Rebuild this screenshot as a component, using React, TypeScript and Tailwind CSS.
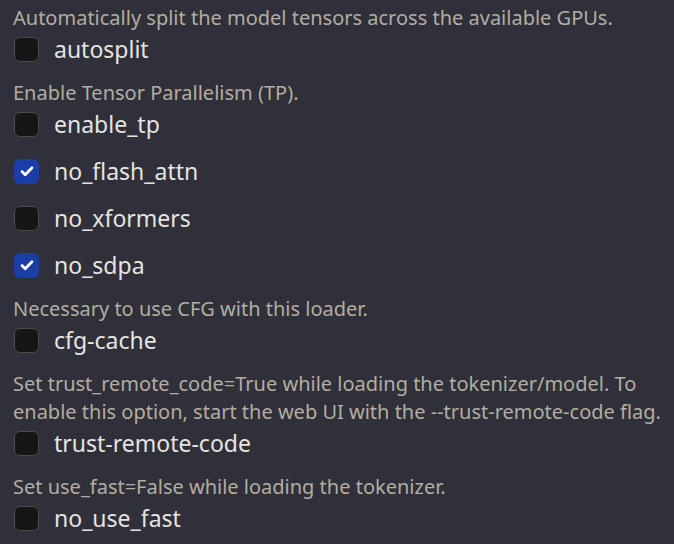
import React from 'react';

type Option = {
  name: string;
  info?: string;
  checked?: boolean;
};

const options: Option[] = [
  { name: 'autosplit', info: 'Automatically split the model tensors across the available GPUs.' },
  { name: 'enable_tp', info: 'Enable Tensor Parallelism (TP).' },
  { name: 'no_flash_attn', checked: true },
  { name: 'no_xformers' },
  { name: 'no_sdpa', checked: true },
  { name: 'cfg-cache', info: 'Necessary to use CFG with this loader.' },
  {
    name: 'trust-remote-code',
    info: 'Set trust_remote_code=True while loading the tokenizer/model. To enable this option, start the web UI with the --trust-remote-code flag.',
  },
  { name: 'no_use_fast', info: 'Set use_fast=False while loading the tokenizer.' },
];

const CheckBox = ({ checked }: { checked?: boolean }) =>
  checked ? (
    <span className="flex h-[25px] w-[25px] shrink-0 items-center justify-center rounded-[6px] bg-[#1a3da8]">
      <svg width="16" height="16" viewBox="0 0 16 16" fill="none">
        <path d="M3 8.6l3.2 3.1L13 4.8" stroke="white" strokeWidth="2.8" strokeLinecap="round" strokeLinejoin="round" />
      </svg>
    </span>
  ) : (
    <span className="h-[25px] w-[25px] shrink-0 rounded-[6px] border border-[#4b4b4b] bg-[#141617]" />
  );

export default function App() {
  return (
    <div
      className="min-h-[544px] w-[674px] bg-[#2f3039] pl-[14px] pr-[8px] pt-[4px]"
      style={{ fontFamily: '"Noto Sans", "Open Sans", sans-serif' }}
    >
      {options.map((opt, i) => (
        <div
          key={opt.name}
          className={i === 0 ? '' : opt.info ? 'mt-[17px]' : 'mt-[21px]'}
        >
          {opt.info && (
            <p className="mb-[4px] -ml-[1px] text-[20px] leading-[28px] text-[#b3ada3]">{opt.info}</p>
          )}
          <label className="flex items-center gap-[15px]">
            <CheckBox checked={opt.checked} />
            <span className="text-[23px] leading-[26px] text-[#e6e4e0]">{opt.name}</span>
          </label>
        </div>
      ))}
    </div>
  );
}
